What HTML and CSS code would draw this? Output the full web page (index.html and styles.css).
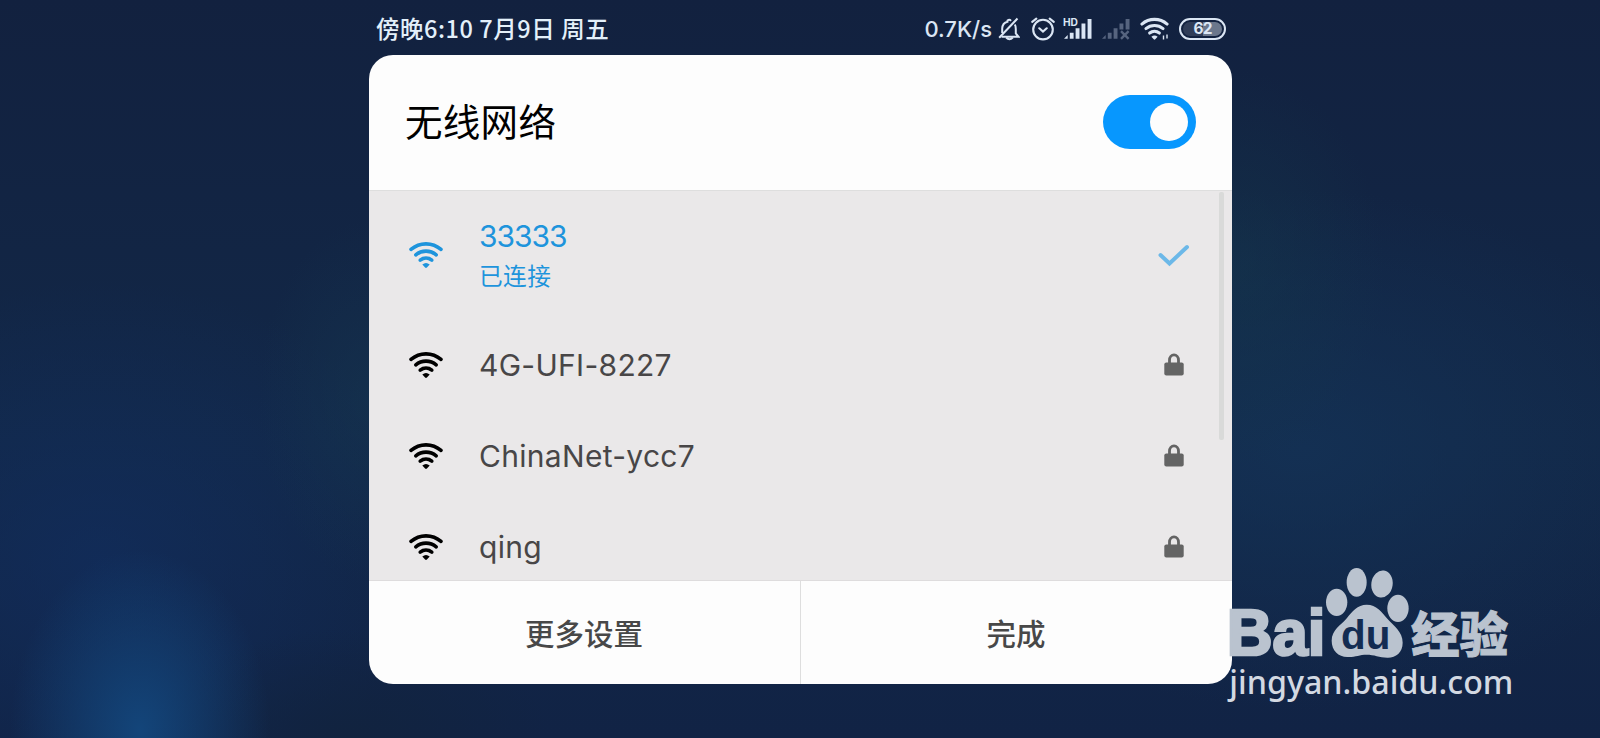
FILE: index.html
```
<!DOCTYPE html>
<html lang="zh-CN">

<head>
    <meta charset="UTF-8">
    <meta name="viewport" content="width=device-width, initial-scale=1.0">
    <title>无线网络</title>
    <link rel="stylesheet" href="styles.css">
</head>

<body>
    <svg class="symbols" width="0" height="0">
        <symbol id="wifi" viewBox="0 0 34 28">
            <g fill="none" stroke="currentColor" stroke-width="3.6" stroke-linecap="round">
                <path d="M2 8.4A23 23 0 0 1 32 8.4" />
                <path d="M6.8 13.8A16 16 0 0 1 27.2 13.8" />
                <path d="M11.2 19.1A9.5 9.5 0 0 1 22.8 19.1" />
            </g>
            <path d="M13.3 23.6Q17 20.6 20.7 23.6L17.9 26.6Q17 27.4 16.1 26.6Z" fill="currentColor" />
        </symbol>
        <symbol id="lock" viewBox="0 0 20 23">
            <path d="M5.5 11V7A4.5 5.2 0 0 1 14.5 7V11" fill="none" stroke="currentColor" stroke-width="2.8" />
            <rect x="0.3" y="9.6" width="19.4" height="13" rx="2" fill="currentColor" />
        </symbol>
    </svg>

    <div class="status-bar">
        <span class="time">傍晚6:10 7月9日 周五</span>
        <div class="status-icons">
            <span class="speed">0.7K/s</span>
            <svg class="bell" width="22" height="24" viewBox="0 0 22 24" fill="none" stroke="currentColor" stroke-width="2">
                <path d="M16.8 7.5Q17.8 9 17.8 12V16.5L20.5 19.8H3.5M4.2 16V11.5Q4.5 5.8 9.5 4.7V3.5Q11.5 2 13 3.8" />
                <path d="M1.2 20.8L19.5 1.5M8.2 20.5Q11.5 24 14.8 20.5" />
            </svg>
            <svg class="alarm" width="24" height="24" viewBox="0 0 24 24" fill="none" stroke="currentColor" stroke-width="2.1" stroke-linecap="round">
                <circle cx="12" cy="12.6" r="9.8" />
                <path d="M1.2 4.8L5.3 1.6M22.8 4.8L18.7 1.6M8.3 11.3L12 14.6L15.7 11.3" />
            </svg>
            <svg class="signal" width="30" height="24" viewBox="0 0 30 24">
                <text class="hd" x="0" y="8.5" textLength="15" lengthAdjust="spacingAndGlyphs">HD</text>
                <path d="M1 21.8L4.7 18V21.8ZM6.8 15.8H10.6V21.8H6.8ZM12.6 11.3H16.5V21.8H12.6ZM18.5 6.5H22.4V21.8H18.5ZM24.6 2H28.5V21.8H24.6Z" fill="currentColor" />
            </svg>
            <svg class="signal signal-off" width="29" height="24" viewBox="0 0 29 24">
                <path d="M1 21.8L4.7 18V21.8ZM6.8 15.8H10.6V21.8H6.8ZM12.6 11.3H16.5V21.8H12.6ZM18.5 6.5H22.4V12.5H18.5ZM24.6 2H28.5V12.5H24.6Z" fill="currentColor" />
                <path d="M20 14.2L27.6 21.8M27.6 14.2L20 21.8" stroke="currentColor" stroke-width="2.4" />
            </svg>
            <svg class="status-wifi" width="30" height="24" viewBox="0 0 30 24">
                <use href="#wifi" x="0" y="0" width="29" height="23.5" />
                <path d="M23.5 18.5V22.5M27 17.5V21.5" stroke="currentColor" stroke-width="1.4" />
            </svg>
            <div class="battery"><span>62</span></div>
        </div>
    </div>

    <div class="dialog">
        <div class="dialog-header">
            <h1 class="title">无线网络</h1>
            <div class="toggle"><div class="knob"></div></div>
        </div>

        <div class="network-list">
            <div class="network connected">
                <svg class="wifi-icon"><use href="#wifi" /></svg>
                <div class="network-text">
                    <div class="name">33333</div>
                    <div class="state">已连接</div>
                </div>
                <svg class="check" width="32" height="24" viewBox="0 0 32 24">
                    <path d="M2.5 12L11.5 20.5L29 4" fill="none" stroke="currentColor" stroke-width="4" stroke-linecap="round" />
                </svg>
            </div>
            <div class="network">
                <svg class="wifi-icon"><use href="#wifi" /></svg>
                <div class="network-text">
                    <div class="name">4G-UFI-8227</div>
                </div>
                <svg class="lock"><use href="#lock" /></svg>
            </div>
            <div class="network">
                <svg class="wifi-icon"><use href="#wifi" /></svg>
                <div class="network-text">
                    <div class="name">ChinaNet-ycc7</div>
                </div>
                <svg class="lock"><use href="#lock" /></svg>
            </div>
            <div class="network">
                <svg class="wifi-icon"><use href="#wifi" /></svg>
                <div class="network-text">
                    <div class="name">qing</div>
                </div>
                <svg class="lock"><use href="#lock" /></svg>
            </div>
            <div class="scrollbar"></div>
        </div>

        <div class="dialog-footer">
            <div class="action">更多设置</div>
            <div class="action">完成</div>
        </div>
    </div>

    <svg class="watermark" width="320" height="170" viewBox="0 0 960 510">
        <g class="mark">
            <text class="bai" x="50" y="315" textLength="296" lengthAdjust="spacingAndGlyphs">Bai</text>
            <ellipse cx="380" cy="157" rx="32" ry="41" />
            <ellipse cx="440" cy="97" rx="30" ry="43" />
            <ellipse cx="516" cy="102" rx="32" ry="41" transform="rotate(8 516 102)" />
            <ellipse cx="564" cy="175" rx="32" ry="41" />
            <path d="M470 164C500 164 515 186 530 204C552 228 578 245 578 278C578 308 556 324 532 323C508 322 492 314 470 314C448 314 436 322 412 321C385 320 365 302 365 272C365 240 392 226 411 204C427 184 442 164 470 164Z" />
            <text class="jingyan" x="604" y="306" textLength="290" lengthAdjust="spacingAndGlyphs">经验</text>
        </g>
        <text class="du" x="393" y="297" textLength="148" lengthAdjust="spacingAndGlyphs">du</text>
        <text class="url" x="58" y="432" textLength="852" lengthAdjust="spacingAndGlyphs">jingyan.baidu.com</text>
    </svg>
</body>

</html>
```
FILE: styles.css
```
body {
    margin: 0;
    width: 1600px;
    height: 738px;
    overflow: hidden;
    position: relative;
    font-family: Inter, "Noto Sans CJK SC", sans-serif;
    background:
        radial-gradient(ellipse 130px 180px at 140px 730px, #13457a, #13457a00),
        radial-gradient(ellipse 200px 110px at 350px 738px, #11233f, #11233f00),
        radial-gradient(ellipse 150px 200px at 1235px 270px, #14384c77, #14384c00),
        radial-gradient(ellipse 110px 180px at 368px 400px, #16385277, #16385200),
        radial-gradient(ellipse 340px 280px at 100px 560px, #112e60aa, #112e6000),
        radial-gradient(ellipse 400px 260px at 1300px 450px, #143256cc, #14325600),
        linear-gradient(#12213f, #122848 60%, #112345);
}

.symbols {
    position: absolute;
}

.status-bar {
    display: flex;
    justify-content: space-between;
    align-items: center;
    box-sizing: border-box;
    width: 850px;
    height: 54px;
    margin-left: 376px;
    padding-top: 3px;
    color: #e3f0fa;
}

.time {
    font-family: "Noto Sans CJK SC", sans-serif;
    font-size: 23.5px;
    font-weight: 500;
    letter-spacing: 0.55px;
    white-space: pre;
    padding-bottom: 2px;
}

.status-icons {
    display: flex;
    align-items: center;
    color: #dbe6f4;
}

.speed {
    font-size: 22px;
    font-weight: 500;
    margin-right: 6px;
}

.alarm {
    margin-left: 11px;
}

.signal {
    margin-left: 8px;
}

.hd {
    font-size: 10.5px;
    font-weight: 700;
    fill: currentColor;
}

.signal-off {
    color: #56647f;
    margin-left: 8px;
}

.status-wifi {
    margin-left: 10px;
}

.battery {
    box-sizing: border-box;
    width: 47px;
    height: 22px;
    margin-left: 9px;
    border: 2px solid #dbe6f4;
    border-radius: 11px;
    padding: 2px;
    display: flex;
}

.battery span {
    flex: 1;
    border-radius: 8px;
    background: linear-gradient(90deg, #303d58 50%, #6b778c 50%);
    font-size: 15.5px;
    font-weight: 700;
    letter-spacing: -0.8px;
    line-height: 14px;
    text-align: center;
}

.dialog {
    width: 863px;
    height: 629.5px;
    margin: 0.5px 0 0 368.5px;
    border-radius: 24px;
    overflow: hidden;
    background: #fdfdfd;
    display: flex;
    flex-direction: column;
}

.dialog-header {
    height: 135.5px;
    box-sizing: border-box;
    padding: 0 35.5px 0 36.5px;
    display: flex;
    justify-content: space-between;
    align-items: center;
}

.title {
    margin: 0;
    font-size: 37.5px;
    font-weight: 400;
    line-height: 50px;
    padding-top: 2px;
    letter-spacing: 0.3px;
    color: #000;
}

.toggle {
    box-sizing: border-box;
    width: 93px;
    height: 54px;
    padding: 8px;
    border-radius: 27px;
    background: #0797fe;
    display: flex;
    justify-content: flex-end;
}

.knob {
    width: 38px;
    height: 38px;
    border-radius: 50%;
    background: #fdfdfd;
}

.network-list {
    position: relative;
    height: 391px;
    overflow: hidden;
    background: #eae8e9;
    box-shadow: inset 0 1px #dedede, inset 0 -1px #dedcdd;
}

.network {
    box-sizing: border-box;
    height: 91px;
    padding: 0 47.5px 0 40.5px;
    display: flex;
    align-items: center;
    color: #000;
}

.wifi-icon {
    width: 34px;
    height: 28px;
}

.network-text {
    flex: 1;
    margin-left: 36px;
    color: #484647;
}

.name {
    font-size: 30px;
    line-height: 38px;
    letter-spacing: 0.3px;
}

.connected {
    height: 129px;
    color: #1e94dc;
}

.connected .network-text {
    color: #1e94dc;
    padding-top: 6px;
}

.connected .name {
    letter-spacing: -1px;
}

.state {
    font-size: 23.7px;
    line-height: 44px;
    letter-spacing: 0.4px;
}

.check {
    margin-right: -6px;
    color: #6cb8e8;
}

.lock {
    width: 20px;
    height: 23px;
    color: #646464;
}

.scrollbar {
    position: absolute;
    top: 2px;
    right: 8px;
    width: 5px;
    height: 248px;
    border-radius: 2px;
    background: #d9dad9;
}

.dialog-footer {
    flex: 1;
    display: flex;
}

.action {
    flex: 1;
    display: flex;
    justify-content: center;
    align-items: center;
    padding-bottom: 2px;
    font-size: 29.5px;
    font-weight: 500;
    color: #484848;
}

.action + .action {
    border-left: 1px solid #dedede;
}

.watermark {
    position: absolute;
    left: 1210px;
    top: 550px;
}

.mark {
    fill: #bac3cf;
}

.bai {
    font-family: "Liberation Sans", sans-serif;
    font-size: 192px;
    font-weight: 700;
    stroke: #bac3cf;
    stroke-width: 8px;
}

.jingyan {
    font-family: "Noto Sans CJK SC", sans-serif;
    font-size: 143px;
    font-weight: 900;
    stroke: #bac3cf;
    stroke-width: 3px;
}

.du {
    font-family: "Liberation Sans", sans-serif;
    font-size: 122px;
    font-weight: 700;
    fill: #132c52;
}

.url {
    font-family: "Noto Sans", sans-serif;
    font-size: 96px;
    font-weight: 500;
    fill: #d3d9e2;
}
```
